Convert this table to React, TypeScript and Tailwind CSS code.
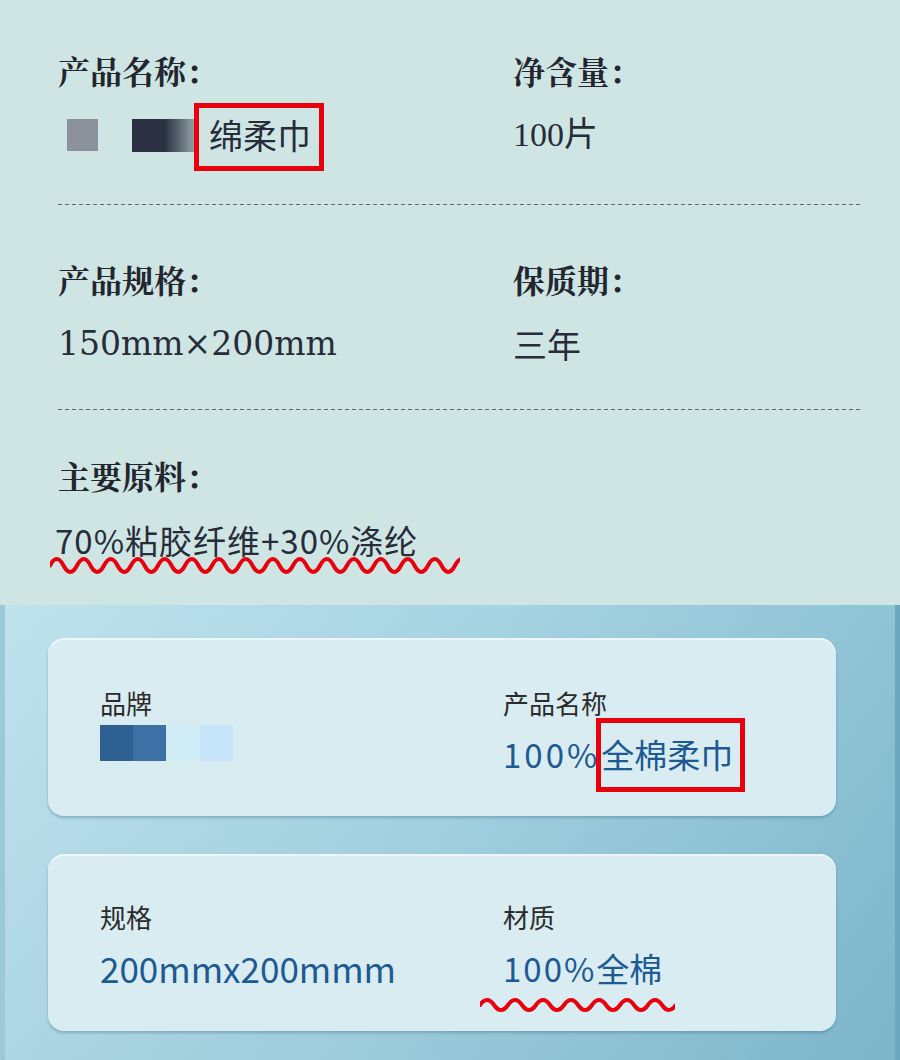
const serifCjk = "font-['Noto_Serif_CJK_SC','Noto_Sans_CJK_SC',sans-serif]";

// red wavy underline drawn as svg path
function wavePath(w: number, h: number, period: number) {
  const mid = h / 2;
  const amp = h / 2 - 2;
  let d = `M0 ${mid}`;
  let up = true;
  for (let x = 0; x < w; x += period / 2) {
    const cx = x + period / 4;
    const cy = up ? mid - amp * 2 : mid + amp * 2;
    d += ` Q${cx} ${cy} ${x + period / 2} ${mid}`;
    up = !up;
  }
  return d;
}

const Wave = ({ w, h, period, className }: { w: number; h: number; period: number; className: string }) => (
  <svg className={className} width={w} height={h} viewBox={`0 0 ${w} ${h}`} fill="none">
    <path d={wavePath(w, h, period)} stroke="#e8000c" strokeWidth="4" strokeLinecap="round" />
  </svg>
);

const Label = ({ children }: { children: React.ReactNode }) => (
  <div className={`${serifCjk} text-[32px] leading-[40px] font-bold text-[#23262f]`}>{children}</div>
);

const Value = ({ children, className = 'text-[34px]' }: { children: React.ReactNode; className?: string }) => (
  <div className={`mt-[23px] h-[44px] leading-[44px] text-[#272c39] whitespace-nowrap ${className}`}>{children}</div>
);

const CardField = ({ label, children }: { label: string; children: React.ReactNode }) => (
  <div>
    <div className="text-[26px] leading-[34px] text-[#2b2b2b]">{label}</div>
    {children}
  </div>
);

const dashed = 'bg-[repeating-linear-gradient(90deg,#5f6876_0_4px,transparent_4px_7px)] bg-no-repeat bg-bottom bg-[length:100%_1px]';

export default function App() {
  return (
    <div className="w-[900px] h-[1060px] overflow-hidden font-['Noto_Sans_CJK_SC',sans-serif]">
      {/* upper: old label */}
      <div className="h-[605px] bg-[#cfe5e4] pl-[58px] pr-[40px]">
        <div className={`grid grid-cols-[455px_1fr] pt-[50px] pb-[48px] ${dashed}`}>
          <div>
            <Label>产品名称：</Label>
            <Value className="text-[34px] flex items-center">
              <span className="ml-[9px] w-[31px] h-[32px] bg-[#8b929b] blur-[0.6px]" />
              <span className="ml-[34px] w-[66px] h-[33px] bg-gradient-to-r from-[#2b3142] via-[#2b3142] to-[#2b3142]/30 blur-[0.6px]" />
              <span className="relative ml-[11px]">
                绵柔巾
                <span className="absolute -left-[15px] -right-[13px] -top-[10px] -bottom-[14px] border-[5px] border-[#e8000c]" />
              </span>
            </Value>
          </div>
          <div>
            <Label>净含量：</Label>
            <Value className="text-[34px] font-['Liberation_Serif','Noto_Sans_CJK_SC',serif]">100片</Value>
          </div>
        </div>

        <div className={`grid grid-cols-[455px_1fr] pt-[54px] pb-[44px] ${dashed}`}>
          <div>
            <Label>产品规格：</Label>
            <Value className="text-[33px] font-['DejaVu_Serif','Noto_Sans_CJK_SC',serif]">150mm×200mm</Value>
          </div>
          <div>
            <Label>保质期：</Label>
            <Value>三年</Value>
          </div>
        </div>

        <div className="pt-[45px]">
          <Label>主要原料：</Label>
          <Value className="relative -ml-[3px] text-[33px] tracking-[1px]">
            70%粘胶纤维+30%涤纶
            <Wave w={410} h={17} period={27} className="absolute -left-[5px] top-[39px]" />
          </Value>
        </div>
      </div>

      {/* lower: new label */}
      <div className="h-[455px] border-l-[5px] border-l-[#9cc9d8] border-r-[5px] border-r-[#6ea8be] bg-[linear-gradient(180deg,rgba(255,255,255,0.06),rgba(0,50,80,0.05)),linear-gradient(100deg,#bbe1ec_0%,#a4d3e2_45%,#83bcd0_100%)] pl-[43px] pt-[33px]">
        <div className="w-[788px] h-[178px] rounded-[16px] bg-[#d9ecf2] shadow-[0_2px_3px_rgba(50,100,130,0.35),inset_0_2px_0_rgba(255,255,255,0.55)] pl-[52px] pt-[48px] grid grid-cols-[403px_1fr]">
          <CardField label="品牌">
            <div className="mt-[5px] flex">
              <span className="w-[33px] h-[36px] bg-[#2e6091]" />
              <span className="w-[33px] h-[36px] bg-[#3d70a4]" />
              <span className="w-[34px] h-[36px] bg-[#d0ecf7]" />
              <span className="w-[33px] h-[36px] bg-[#c7e5fa]" />
            </div>
          </CardField>
          <CardField label="产品名称">
            <div className="mt-[14px] text-[33px] leading-[40px] text-[#1d5a93] whitespace-nowrap">
              <span className="tracking-[3px]">100%</span>
              <span className="relative ml-[1px]">
                全棉柔巾
                <span className="absolute -left-[5px] -right-[12px] -top-[12px] -bottom-[14px] border-[5px] border-[#e8000c]" />
              </span>
            </div>
          </CardField>
        </div>

        <div className="mt-[38px] w-[788px] h-[177px] rounded-[16px] bg-[#d9ecf2] shadow-[0_2px_3px_rgba(50,100,130,0.35),inset_0_2px_0_rgba(255,255,255,0.55)] pl-[52px] pt-[46px] grid grid-cols-[403px_1fr]">
          <CardField label="规格">
            <div className="mt-[14px] text-[35px] leading-[40px] text-[#1d5a93] whitespace-nowrap">200mmx200mmm</div>
          </CardField>
          <CardField label="材质">
            <div className="relative mt-[14px] text-[33px] leading-[40px] text-[#1d5a93] whitespace-nowrap">
              <span className="tracking-[2px]">100%</span>全棉
              <Wave w={195} h={14} period={28} className="absolute -left-[23px] top-[50px]" />
            </div>
          </CardField>
        </div>
      </div>
    </div>
  );
}
